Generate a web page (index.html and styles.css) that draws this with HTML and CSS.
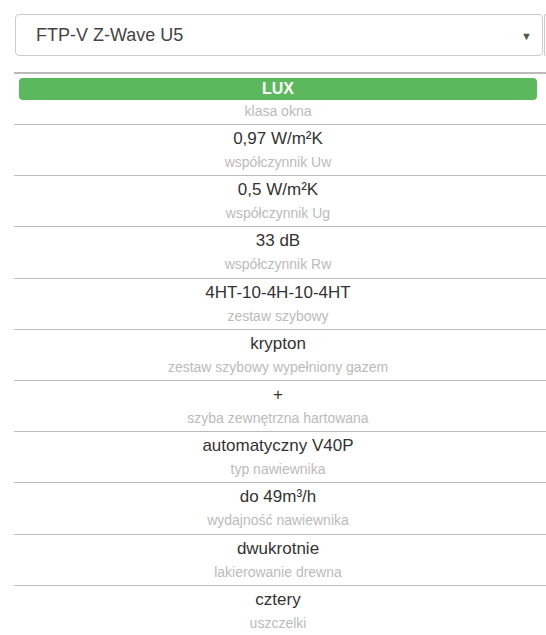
FILE: index.html
```html
<!DOCTYPE html>
<html lang="pl">
<head>
  <meta charset="UTF-8" />
  <meta name="viewport" content="width=device-width,initial-scale=1.0" />
  <title>FTP-V Z-Wave U5</title>
  <link rel="stylesheet" href="styles.css">
</head>
<body>
  <div class="page">
    <!-- model picker -->
    <div class="picker">
      <div class="select">
        <span class="select-value">FTP-V Z-Wave U5</span>
        <span class="select-arrow">&#9660;</span>
      </div>
      <div class="picker-next"></div>
    </div>

    <div class="specs">
      <div class="spec spec-first">
        <div class="badge">LUX</div>
        <div class="spec-label">klasa okna</div>
      </div>
      <div class="spec">
        <div class="spec-value">0,97 W/m²K</div>
        <div class="spec-label">współczynnik Uw</div>
      </div>
      <div class="spec">
        <div class="spec-value">0,5 W/m²K</div>
        <div class="spec-label">współczynnik Ug</div>
      </div>
      <div class="spec">
        <div class="spec-value">33 dB</div>
        <div class="spec-label">współczynnik Rw</div>
      </div>
      <div class="spec">
        <div class="spec-value">4HT-10-4H-10-4HT</div>
        <div class="spec-label">zestaw szybowy</div>
      </div>
      <div class="spec">
        <div class="spec-value">krypton</div>
        <div class="spec-label">zestaw szybowy wypełniony gazem</div>
      </div>
      <div class="spec">
        <div class="spec-value">+</div>
        <div class="spec-label">szyba zewnętrzna hartowana</div>
      </div>
      <div class="spec">
        <div class="spec-value">automatyczny V40P</div>
        <div class="spec-label">typ nawiewnika</div>
      </div>
      <div class="spec">
        <div class="spec-value">do 49m³/h</div>
        <div class="spec-label">wydajność nawiewnika</div>
      </div>
      <div class="spec">
        <div class="spec-value">dwukrotnie</div>
        <div class="spec-label">lakierowanie drewna</div>
      </div>
      <div class="spec">
        <div class="spec-value">cztery</div>
        <div class="spec-label">uszczelki</div>
      </div>
    </div>
  </div>
</body>
</html>
```

FILE: styles.css
```css
html,body{margin:0;width:100vw;height:100vh;overflow:hidden;background:#fff}
body {
  font-family: "Liberation Sans", Arial, sans-serif;
  color: #333;
}
.page {
  width: 532px;
  padding: 14px 0 0 14px;
}

/* Picker row */
.picker {
  display: flex;
  gap: 1px;
  margin-bottom: 16px;
}
.select {
  box-sizing: border-box;
  width: 528px;
  height: 42px;
  margin-left: 1px;
  padding: 0 10px 0 20px;
  border: 1px solid #ccc;
  border-radius: 4px;
  display: flex;
  align-items: center;
  justify-content: space-between;
  font-size: 18px;
  color: #444;
}
.select-arrow {
  font-size: 11px;
  color: #555;
  padding-top: 2px;
}
.picker-next {
  box-sizing: border-box;
  width: 2px;
  height: 42px;
  border: 1px solid #ccc;
  border-right: none;
  border-radius: 4px 0 0 4px;
}

/* Spec list */
.specs {
  width: 532px;
  border-top: 2px solid #bbb;
}
.spec {
  padding: 4px 4px 3.2px 0;
  border-bottom: 1px solid #bbb;
  text-align: center;
}
.spec-first {
  padding: 4px 9px 3px 5px;
}
.badge {
  height: 22px;
  line-height: 22px;
  background: #5cb85c;
  border-radius: 4px;
  color: #fff;
  font-weight: bold;
  font-size: 16px;
}
.spec-value {
  font-size: 17px;
  line-height: 20px;
  color: #333;
  margin-bottom: 3px;
}
.spec-label {
  font-size: 14px;
  line-height: 20px;
  color: #bbb;
}
.spec-first .spec-label {
  margin-top: 1px;
}
```
